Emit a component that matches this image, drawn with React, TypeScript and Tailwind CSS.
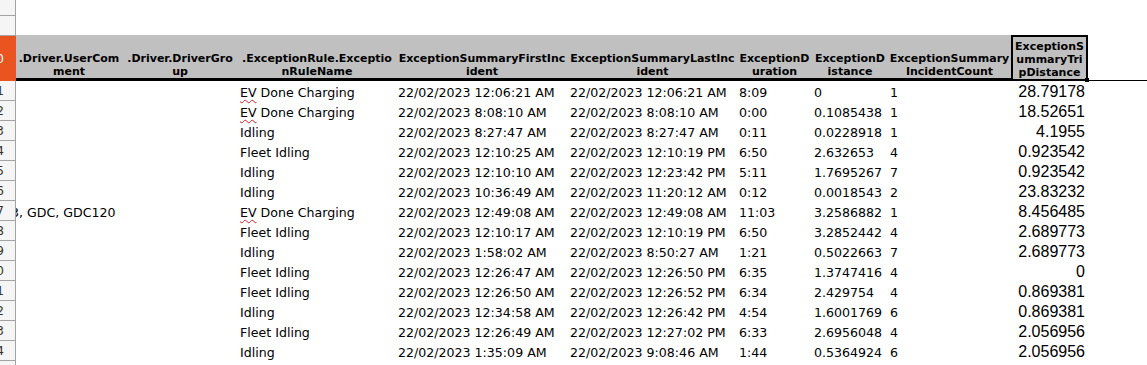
import React from 'react';

const cols = [
  { w: 'w-[106px]', head: ['.Driver.UserCom', 'ment'] },
  { w: 'w-[116px]', head: ['.Driver.DriverGro', 'up'] },
  { w: 'w-[158px]', head: ['.ExceptionRule.Exceptio', 'nRuleName'] },
  { w: 'w-[172px]', head: ['ExceptionSummaryFirstInc', 'ident'] },
  { w: 'w-[169px]', head: ['ExceptionSummaryLastInc', 'ident'] },
  { w: 'w-[75px]', head: ['ExceptionD', 'uration'] },
  { w: 'w-[76px]', head: ['ExceptionD', 'istance'] },
  { w: 'w-[123px]', head: ['ExceptionSummary', 'IncidentCount'] },
];

type Row = [string, string, string, string, string, string, string, string];

// note, rule, first, last, duration, distance, count, trip distance
const rows: Row[] = [
  ['', 'EV Done Charging', '22/02/2023 12:06:21 AM', '22/02/2023 12:06:21 AM', '8:09', '0', '1', '28.79178'],
  ['', 'EV Done Charging', '22/02/2023 8:08:10 AM', '22/02/2023 8:08:10 AM', '0:00', '0.1085438', '1', '18.52651'],
  ['', 'Idling', '22/02/2023 8:27:47 AM', '22/02/2023 8:27:47 AM', '0:11', '0.0228918', '1', '4.1955'],
  ['', 'Fleet Idling', '22/02/2023 12:10:25 AM', '22/02/2023 12:10:19 PM', '6:50', '2.632653', '4', '0.923542'],
  ['', 'Idling', '22/02/2023 12:10:10 AM', '22/02/2023 12:23:42 PM', '5:11', '1.7695267', '7', '0.923542'],
  ['', 'Idling', '22/02/2023 10:36:49 AM', '22/02/2023 11:20:12 AM', '0:12', '0.0018543', '2', '23.83232'],
  ['3, GDC, GDC120', 'EV Done Charging', '22/02/2023 12:49:08 AM', '22/02/2023 12:49:08 AM', '11:03', '3.2586882', '1', '8.456485'],
  ['', 'Fleet Idling', '22/02/2023 12:10:17 AM', '22/02/2023 12:10:19 PM', '6:50', '3.2852442', '4', '2.689773'],
  ['', 'Idling', '22/02/2023 1:58:02 AM', '22/02/2023 8:50:27 AM', '1:21', '0.5022663', '7', '2.689773'],
  ['', 'Fleet Idling', '22/02/2023 12:26:47 AM', '22/02/2023 12:26:50 PM', '6:35', '1.3747416', '4', '0'],
  ['', 'Fleet Idling', '22/02/2023 12:26:50 AM', '22/02/2023 12:26:52 PM', '6:34', '2.429754', '4', '0.869381'],
  ['', 'Idling', '22/02/2023 12:34:58 AM', '22/02/2023 12:26:42 PM', '4:54', '1.6001769', '6', '0.869381'],
  ['', 'Fleet Idling', '22/02/2023 12:26:49 AM', '22/02/2023 12:27:02 PM', '6:33', '2.6956048', '4', '2.056956'],
  ['', 'Idling', '22/02/2023 1:35:09 AM', '22/02/2023 9:08:46 AM', '1:44', '0.5364924', '6', '2.056956'],
];

const cell = 'shrink-0 pl-[2px] pt-[4px] leading-[16px] whitespace-nowrap';

function RuleName({ name }: { name: string }) {
  // spellchecker marks "EV"
  if (name.startsWith('EV ')) {
    return (
      <>
        <span className="underline decoration-wavy decoration-[#e01b24] decoration-1 underline-offset-[2px]">EV</span>
        {name.slice(2)}
      </>
    );
  }
  return <>{name}</>;
}

function RowHeaders() {
  return (
    <div className="w-[16px] shrink-0 flex flex-col font-['DejaVu_Sans',sans-serif] text-[12px] text-[#333]">
      <div className="h-[16px] shrink-0 bg-[#f5f5f5] border-r border-b border-[#a3a3a3]" />
      <div className="h-[20px] shrink-0 bg-[#f5f5f5] border-r border-b border-[#a3a3a3]" />
      <div className="h-[45px] shrink-0 bg-[#e95420] flex items-center justify-end pr-[12px] overflow-hidden text-white">10</div>
      {Array.from({ length: 15 }, (_, i) => (
        <div
          key={i}
          className="h-[20px] shrink-0 bg-[#f5f5f5] border-r border-b border-[#a3a3a3] flex items-center justify-end pr-[11px] overflow-hidden"
        >
          {i + 11}
        </div>
      ))}
    </div>
  );
}

function HeaderRow() {
  return (
    <div className="flex h-[46px] shrink-0 font-['DejaVu_Sans',sans-serif] text-[11px] font-bold leading-[13px] text-black">
      {cols.map((c, i) => (
        <div
          key={i}
          className={`${c.w} shrink-0 bg-[#c0c0c0] border-b-[3px] border-black flex flex-col justify-end items-center whitespace-nowrap overflow-hidden`}
        >
          {c.head.map((l, j) => (
            <div key={j}>{l}</div>
          ))}
        </div>
      ))}
      <div className="relative w-[77px] shrink-0 bg-[#c0c0c0] border-2 border-black flex flex-col justify-end items-center whitespace-nowrap">
        <div>ExceptionS</div>
        <div>ummaryTri</div>
        <div>pDistance</div>
        <div className="absolute right-[-3px] bottom-[-3px] w-[4px] h-[4px] bg-black" />
      </div>
      <div className="flex-1 border-b border-black" />
    </div>
  );
}

export default function App() {
  return (
    <div className="flex w-[1147px] h-[365px] overflow-hidden bg-white">
      <RowHeaders />
      <div className="flex-1 flex flex-col overflow-hidden">
        <div className="h-[35px] shrink-0" />
        <HeaderRow />
        {rows.map((r, i) => (
          <div key={i} className="flex h-[20px] shrink-0 font-['DejaVu_Sans',sans-serif] text-[12.6px] text-black">
            <div className={`${cell} w-[106px]`}>
              {r[0] && <span className="-ml-[7px]">{r[0]}</span>}
            </div>
            <div className={`${cell} w-[116px]`} />
            <div className={`${cell} w-[158px]`}>
              <RuleName name={r[1]} />
            </div>
            <div className={`${cell} w-[172px]`}>{r[2]}</div>
            <div className={`${cell} w-[169px]`}>{r[3]}</div>
            <div className={`${cell} w-[75px]`}>{r[4]}</div>
            <div className={`${cell} w-[76px]`}>{r[5]}</div>
            <div className={`${cell} w-[123px]`}>{r[6]}</div>
            <div className="shrink-0 w-[77px] pr-[3px] pt-[3px] leading-[16px] text-right font-['Liberation_Sans',sans-serif] text-[16px]">
              {r[7]}
            </div>
          </div>
        ))}
      </div>
    </div>
  );
}
